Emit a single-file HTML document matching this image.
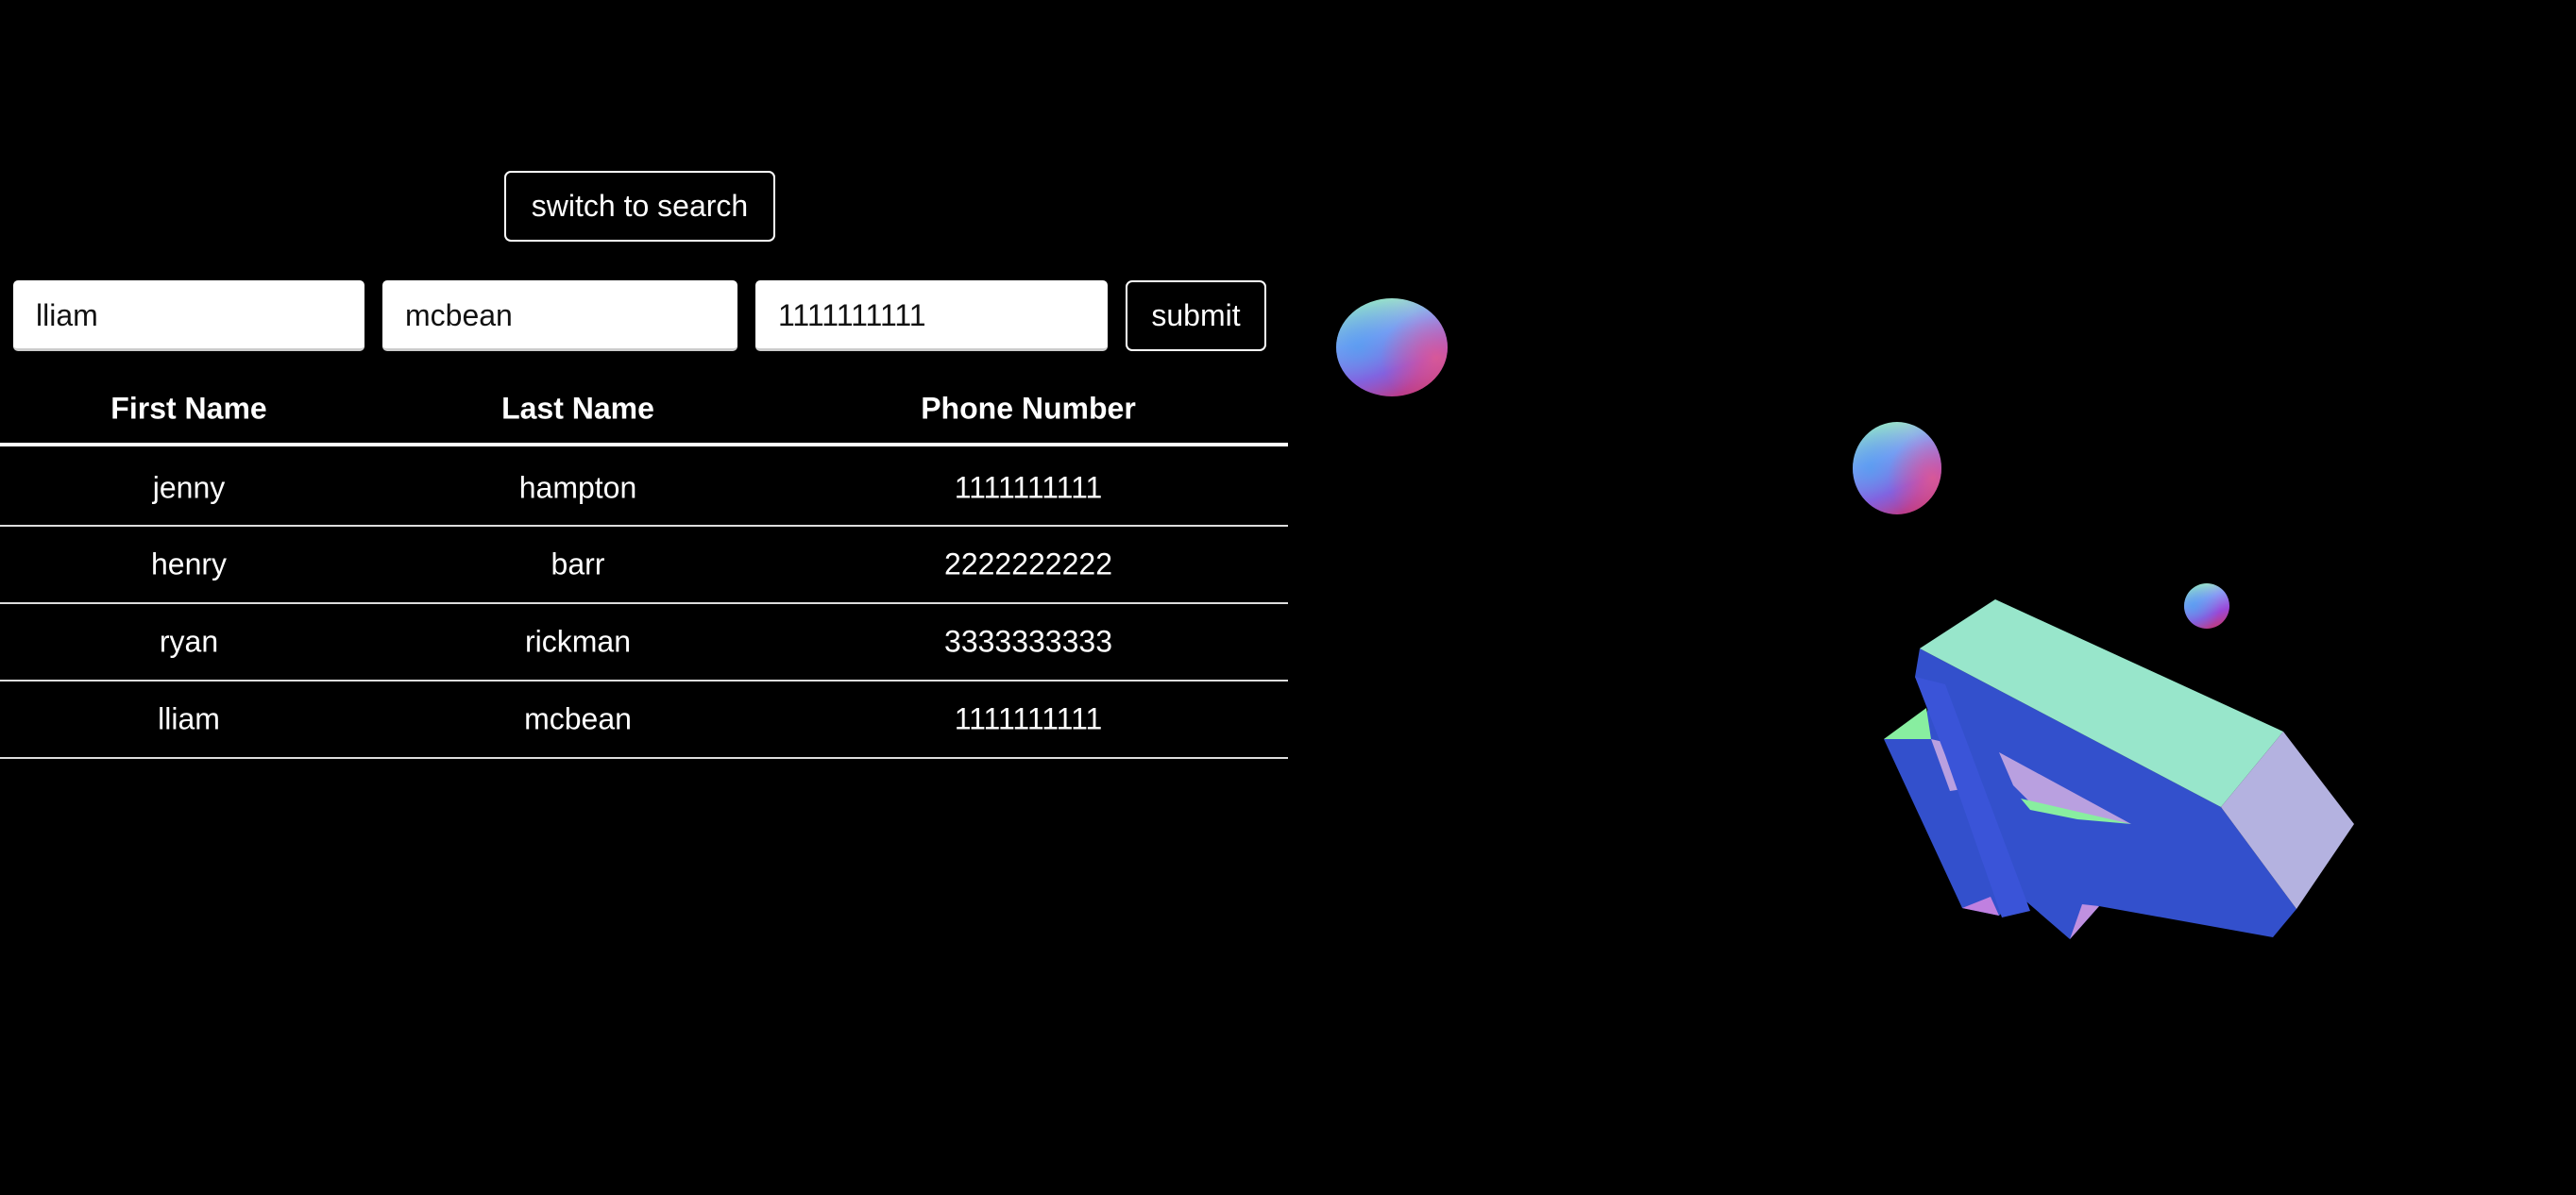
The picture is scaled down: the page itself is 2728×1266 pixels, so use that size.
<!DOCTYPE html>
<html><head><meta charset="utf-8"><style>
html,body{margin:0;padding:0;background:#000;width:2728px;height:1266px;overflow:hidden;font-family:"Liberation Sans",sans-serif;color:#fff}
.a{position:absolute;box-sizing:border-box}
.btn{border:2px solid #fff;border-radius:7px;background:#000;color:#fff;font-size:32px;display:flex;align-items:center;justify-content:center}
.inp{background:#fff;border-radius:5px;border-bottom:3px solid #ccc;color:#111;font-size:32px;display:flex;align-items:center;padding-left:24px;padding-top:2px}
.t{position:absolute;font-size:32px;transform:translate(-50%,-50%);white-space:nowrap}
.h{font-weight:bold}
.line{position:absolute;left:0;width:1364px;height:2px;background:#ddd}
</style></head><body>
<div class="a btn" style="left:534px;top:181px;width:287px;height:75px">switch to search</div>
<div class="a inp" style="left:14px;top:297px;width:372px;height:75px">lliam</div>
<div class="a inp" style="left:405px;top:297px;width:376px;height:75px">mcbean</div>
<div class="a inp" style="left:800px;top:297px;width:373px;height:75px">1111111111</div>
<div class="a btn" style="left:1192px;top:297px;width:149px;height:75px">submit</div>

<div class="t h" style="left:200px;top:433px">First Name</div>
<div class="t h" style="left:612px;top:433px">Last Name</div>
<div class="t h" style="left:1089px;top:433px">Phone Number</div>
<div class="line" style="top:469px;height:4px;background:#fff"></div>

<div class="t" style="left:200px;top:517px">jenny</div>
<div class="t" style="left:612px;top:517px">hampton</div>
<div class="t" style="left:1089px;top:517px">1111111111</div>
<div class="line" style="top:556px"></div>
<div class="t" style="left:200px;top:598px">henry</div>
<div class="t" style="left:612px;top:598px">barr</div>
<div class="t" style="left:1089px;top:598px">2222222222</div>
<div class="line" style="top:638px"></div>
<div class="t" style="left:200px;top:680px">ryan</div>
<div class="t" style="left:612px;top:680px">rickman</div>
<div class="t" style="left:1089px;top:680px">3333333333</div>
<div class="line" style="top:720px"></div>
<div class="t" style="left:200px;top:762px">lliam</div>
<div class="t" style="left:612px;top:762px">mcbean</div>
<div class="t" style="left:1089px;top:762px">1111111111</div>
<div class="line" style="top:802px"></div>

<svg class="a" style="left:0;top:0" width="2728" height="1266" viewBox="0 0 2728 1266">
<defs>
<linearGradient id="s" x1="0.3" y1="0" x2="0.7" y2="1">
<stop offset="0" stop-color="#9ff0c0"/><stop offset="0.35" stop-color="#8a9cf4"/><stop offset="0.7" stop-color="#9a48d8"/><stop offset="1" stop-color="#c03a7a"/>
</linearGradient>
<radialGradient id="s2" cx="0.2" cy="0.5" r="0.6">
<stop offset="0" stop-color="#4aa0f0" stop-opacity="0.7"/><stop offset="1" stop-color="#4aa0f0" stop-opacity="0"/>
</radialGradient>
<radialGradient id="s3" cx="0.9" cy="0.6" r="0.5">
<stop offset="0" stop-color="#f06080" stop-opacity="0.7"/><stop offset="1" stop-color="#f06080" stop-opacity="0"/>
</radialGradient>
</defs>
<g>
<ellipse cx="1474" cy="368" rx="59" ry="52" fill="url(#s)"/><ellipse cx="1474" cy="368" rx="59" ry="52" fill="url(#s2)"/><ellipse cx="1474" cy="368" rx="59" ry="52" fill="url(#s3)"/>
<ellipse cx="2009" cy="496" rx="47" ry="49" fill="url(#s)"/><ellipse cx="2009" cy="496" rx="47" ry="49" fill="url(#s2)"/><ellipse cx="2009" cy="496" rx="47" ry="49" fill="url(#s3)"/>
<ellipse cx="2337" cy="642" rx="24" ry="24" fill="url(#s)"/><ellipse cx="2337" cy="642" rx="24" ry="24" fill="url(#s2)"/>
</g>
<g>
<polygon points="2028,717 2033,687 2352,855 2432,963 2407,993 2223,960 2192,995 2140,950 2117,970 2078,962 1995,783 2032,783 2042,750" fill="#3350cc"/>
<polygon points="1995,783 2040,750 2045,783" fill="#88eea0"/>
<polygon points="2117,797 2257,873 2200,862 2150,850 2132,832" fill="#b9a0e0"/>
<polygon points="2140,846 2257,873 2200,868 2150,858" fill="#88eea0"/>
<polygon points="2045,783 2075,790 2085,835 2065,838" fill="#b9a0e0"/>
<polygon points="2028,717 2060,725 2150,965 2120,972 2060,800" fill="#3a54d8"/>
<polygon points="2033,687 2113,635 2418,775 2352,855" fill="#98e6cb"/>
<polygon points="2418,775 2493,873 2432,963 2352,855" fill="#b4b2e0"/>
<polygon points="2078,962 2117,970 2108,950" fill="#c080e0"/>
<polygon points="2192,995 2223,960 2205,958" fill="#c090e0"/>
</g>
</svg>
</body></html>
